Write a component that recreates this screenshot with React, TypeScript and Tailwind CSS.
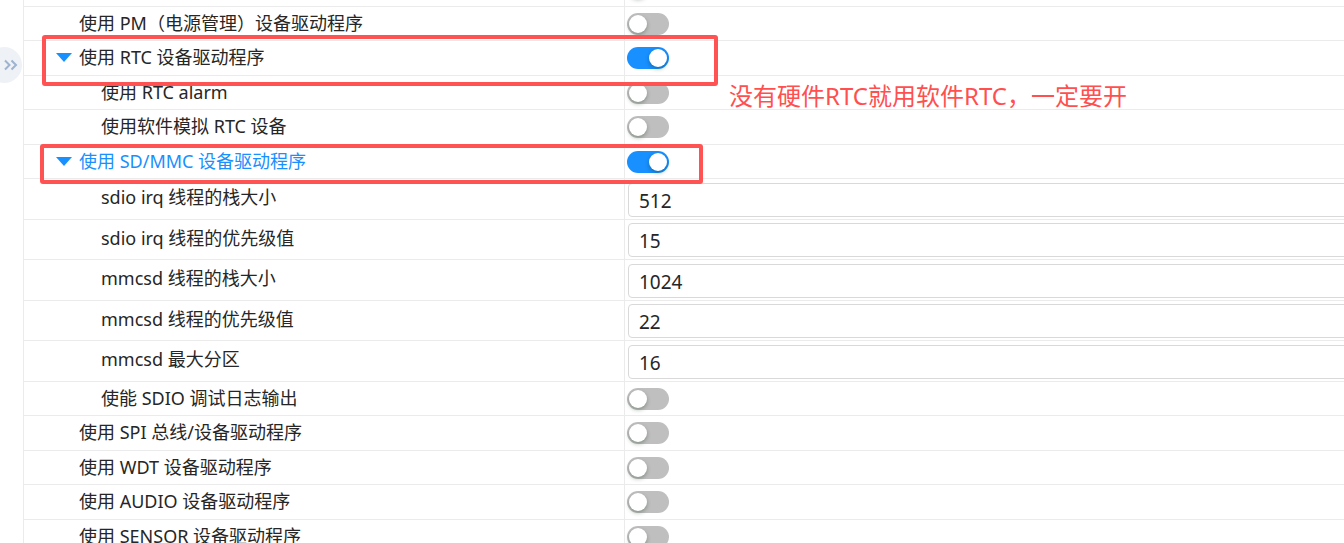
import React from 'react';

type Row =
  | { kind: 'toggle'; label: string; level: 0 | 1; on?: boolean; expand?: boolean; active?: boolean }
  | { kind: 'input'; label: string; value: string };

const ROWS: Row[] = [
  { kind: 'toggle', label: '', level: 0 },
  { kind: 'toggle', label: '使用 PM（电源管理）设备驱动程序', level: 0 },
  { kind: 'toggle', label: '使用 RTC 设备驱动程序', level: 0, on: true, expand: true },
  { kind: 'toggle', label: '使用 RTC alarm', level: 1 },
  { kind: 'toggle', label: '使用软件模拟 RTC 设备', level: 1 },
  { kind: 'toggle', label: '使用 SD/MMC 设备驱动程序', level: 0, on: true, expand: true, active: true },
  { kind: 'input', label: 'sdio irq 线程的栈大小', value: '512' },
  { kind: 'input', label: 'sdio irq 线程的优先级值', value: '15' },
  { kind: 'input', label: 'mmcsd 线程的栈大小', value: '1024' },
  { kind: 'input', label: 'mmcsd 线程的优先级值', value: '22' },
  { kind: 'input', label: 'mmcsd 最大分区', value: '16' },
  { kind: 'toggle', label: '使能 SDIO 调试日志输出', level: 1 },
  { kind: 'toggle', label: '使用 SPI 总线/设备驱动程序', level: 0 },
  { kind: 'toggle', label: '使用 WDT 设备驱动程序', level: 0 },
  { kind: 'toggle', label: '使用 AUDIO 设备驱动程序', level: 0 },
  { kind: 'toggle', label: '使用 SENSOR 设备驱动程序', level: 0 },
];

function Toggle({ on }: { on?: boolean }) {
  return (
    <div
      className={
        'relative h-[22px] w-[42px] rounded-full ' + (on ? 'bg-[#1890ff]' : 'bg-[#bfbfbf]')
      }
    >
      <div
        className={
          'absolute top-[2px] h-[18px] w-[18px] rounded-full bg-white shadow-[0_2px_4px_rgba(0,35,11,0.3)] ' +
          (on ? 'left-[22px]' : 'left-[2px]')
        }
      />
    </div>
  );
}

function Caret() {
  return (
    <svg width="16" height="9" viewBox="0 0 16 9" className="shrink-0">
      <path d="M0 0 H16 L8 9 Z" fill="#1890ff" />
    </svg>
  );
}

function ConfigRow({ row }: { row: Row }) {
  if (row.kind === 'input') {
    return (
      <div className="flex h-[40.5px] border-b border-[#ebebeb]">
        <div className="flex w-[600px] shrink-0 items-center pl-[77px] pb-[2px]">{row.label}</div>
        <div className="flex flex-1 items-center border-l border-[#ebebeb] pl-[3px] pt-[2px]">
          <div className="flex h-[34px] w-full items-center rounded-[4px] border border-[#d9d9d9] pl-[10px] pt-[2px] text-[19px] text-[#262626]">
            {row.value}
          </div>
        </div>
      </div>
    );
  }
  return (
    <div className="flex h-[34.5px] border-b border-[#ebebeb]">
      <div
        className={
          'flex w-[600px] shrink-0 items-center ' +
          (row.level === 1 ? 'pl-[77px]' : row.expand ? 'gap-[7px] pl-[32px]' : 'pl-[55px]') +
          (row.active ? ' text-[#1890ff]' : '')
        }
      >
        {row.expand && <Caret />}
        <span>{row.label}</span>
      </div>
      <div className="flex flex-1 items-center border-l border-[#ebebeb] pl-[2px] pt-[1px]">
        <Toggle on={row.on} />
      </div>
    </div>
  );
}

export default function App() {
  return (
    <div
      className="relative h-[543px] w-[1344px] overflow-hidden bg-white text-[18px] text-[#262626]"
      style={{ fontFamily: '"Noto Sans", "Noto Sans CJK SC", sans-serif' }}
    >
      <div className="flex">
        {/* collapsed side strip */}
        <div className="w-[24px] shrink-0 border-r border-[#ebebeb]" />

        {/* config table */}
        <div className="-mt-[28px] w-[1400px] shrink-0">
          {ROWS.map((row, i) => (
            <ConfigRow key={i} row={row} />
          ))}
        </div>
      </div>

      {/* expand button */}
      <div className="absolute left-[-14px] top-[47px] flex h-[36px] w-[36px] items-center justify-end rounded-full bg-[#eef1f5] pr-[4px]">
        <svg width="14" height="12" viewBox="0 0 14 12" fill="none" stroke="#9db3cf" strokeWidth="2">
          <path d="M1 1.5 L5.5 6 L1 10.5" />
          <path d="M7.5 1.5 L12 6 L7.5 10.5" />
        </svg>
      </div>

      {/* annotations */}
      <div className="absolute left-[42px] top-[35px] h-[51px] w-[676px] rounded-[3px] border-4 border-[#ff5252]" />
      <div className="absolute left-[40px] top-[144px] h-[40px] w-[663px] rounded-[3px] border-4 border-[#ff5252]" />
      <div className="absolute left-[729px] top-[78px] text-[24px] text-[#ff4f4f]">
        没有硬件RTC就用软件RTC，一定要开
      </div>
    </div>
  );
}
